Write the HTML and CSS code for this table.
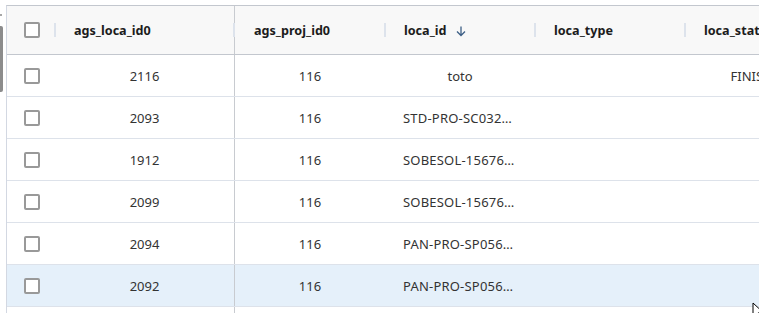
FILE: index.html
```html
<!DOCTYPE html>
<html>
<head>
<meta charset="utf-8">
<link rel="stylesheet" href="styles.css">
</head>
<body>
<div class="page">
  <div class="gutter">
    <span class="dot"></span>
    <span class="thumb"></span>
  </div>
  <div class="grid">
    <div class="row head">
      <div class="cell chk"><span class="box"></span></div>
      <div class="cell hc pin">ags_loca_id0</div>
      <div class="cell hc">ags_proj_id0</div>
      <div class="cell hc">loca_id <svg class="sort" width="12" height="12" viewBox="0 0 12 12"><path d="M6 1.5v9M2 6.5l4 4 4-4" fill="none" stroke="#3d5f86" stroke-width="1.3"/></svg></div>
      <div class="cell hc">loca_type</div>
      <div class="cell hc">loca_stat</div>
    </div>
    <div class="row">
      <div class="cell chk"><span class="box"></span></div>
      <div class="cell dc pin">2116</div>
      <div class="cell dc">116</div>
      <div class="cell dc">toto</div>
      <div class="cell dc"></div>
      <div class="cell dc">FINISHED</div>
    </div>
    <div class="row">
      <div class="cell chk"><span class="box"></span></div>
      <div class="cell dc pin">2093</div>
      <div class="cell dc">116</div>
      <div class="cell dc trunc">STD-PRO-SC032…</div>
      <div class="cell dc"></div>
      <div class="cell dc"></div>
    </div>
    <div class="row">
      <div class="cell chk"><span class="box"></span></div>
      <div class="cell dc pin">1912</div>
      <div class="cell dc">116</div>
      <div class="cell dc trunc">SOBESOL-15676…</div>
      <div class="cell dc"></div>
      <div class="cell dc"></div>
    </div>
    <div class="row">
      <div class="cell chk"><span class="box"></span></div>
      <div class="cell dc pin">2099</div>
      <div class="cell dc">116</div>
      <div class="cell dc trunc">SOBESOL-15676…</div>
      <div class="cell dc"></div>
      <div class="cell dc"></div>
    </div>
    <div class="row">
      <div class="cell chk"><span class="box"></span></div>
      <div class="cell dc pin">2094</div>
      <div class="cell dc">116</div>
      <div class="cell dc trunc">PAN-PRO-SP056…</div>
      <div class="cell dc"></div>
      <div class="cell dc"></div>
    </div>
    <div class="row sel">
      <div class="cell chk"><span class="box"></span></div>
      <div class="cell dc pin">2092</div>
      <div class="cell dc">116</div>
      <div class="cell dc trunc">PAN-PRO-SP056…</div>
      <div class="cell dc"></div>
      <div class="cell dc"></div>
    </div>
    <div class="row">
      <div class="cell chk"><span class="box"></span></div>
      <div class="cell dc pin"></div>
      <div class="cell dc"></div>
      <div class="cell dc"></div>
      <div class="cell dc"></div>
      <div class="cell dc"></div>
    </div>
  </div>
</div>
<svg class="cursor" width="12" height="18" viewBox="0 0 12 18"><path d="M1 1v14l3.5-3.5 2.5 5.5 2-1-2.5-5.3h5z" fill="#fff" stroke="#000" stroke-width="1"/></svg>
</body>
</html>
```
FILE: styles.css
```css
html, body {
  margin: 0;
  padding: 0;
  background: #fff;
  overflow: hidden;
  width: 759px;
  height: 313px;
}
body {
  font-family: "Noto Sans", "Open Sans", sans-serif;
  font-size: 13px;
  color: #333;
  position: relative;
}
.page {
  display: flex;
  padding-top: 5px;
}
.gutter {
  width: 6px;
  flex: none;
  position: relative;
}
.dot {
  position: absolute;
  left: 0;
  top: 9px;
  width: 2px;
  height: 2px;
  background: #8a8a8a;
  border-radius: 1px;
}
.thumb {
  position: absolute;
  left: 0;
  top: 21px;
  width: 3px;
  height: 66px;
  background: #8c8c8c;
  border-radius: 0 2px 2px 0;
}
.grid {
  border-top: 1px solid #c3c7ce;
  border-left: 1px solid #d3d8e2;
  flex: none;
  width: 900px;
}
.row {
  display: grid;
  grid-template-columns: 48px 180px 150px 150px 150px 150px;
  height: 41px;
  border-bottom: 1px solid #dde2ea;
  background: #fff;
}
.row.head {
  height: 48px;
  background: #f8f8f8;
  border-bottom: 1px solid #c3c7ce;
}
.row.sel {
  background: #e5f0fa;
}
.cell {
  display: flex;
  align-items: center;
  min-width: 0;
  position: relative;
}
.chk {
  padding-left: 17px;
}
.box {
  width: 12px;
  height: 12px;
  border: 2px solid #999;
  border-radius: 2px;
  background: #fff;
  box-sizing: content-box;
}
.pin {
  border-right: 1px solid #c8cbd0;
}
.hc {
  font-weight: bold;
  font-size: 12.6px;
  color: #1c1c1c;
  padding-left: 19px;
  padding-top: 1px;
  white-space: nowrap;
}
.hc::before {
  content: "";
  position: absolute;
  left: -1px;
  top: 17px;
  width: 2px;
  height: 14px;
  background: #dde3ec;
}
.head .pin + .hc::before {
  left: -2px;
}
.sort {
  margin-left: 8px;
  margin-top: 1px;
}
.dc {
  display: block;
  padding: 0 18px;
  white-space: nowrap;
  overflow: hidden;
  line-height: 43px;
  height: 41px;
  text-align: center;
  text-overflow: ellipsis;
}
.dc.trunc {
  text-align: left;
  letter-spacing: 0.2px;
}
.cursor {
  position: absolute;
  left: 752px;
  top: 302px;
}
```
